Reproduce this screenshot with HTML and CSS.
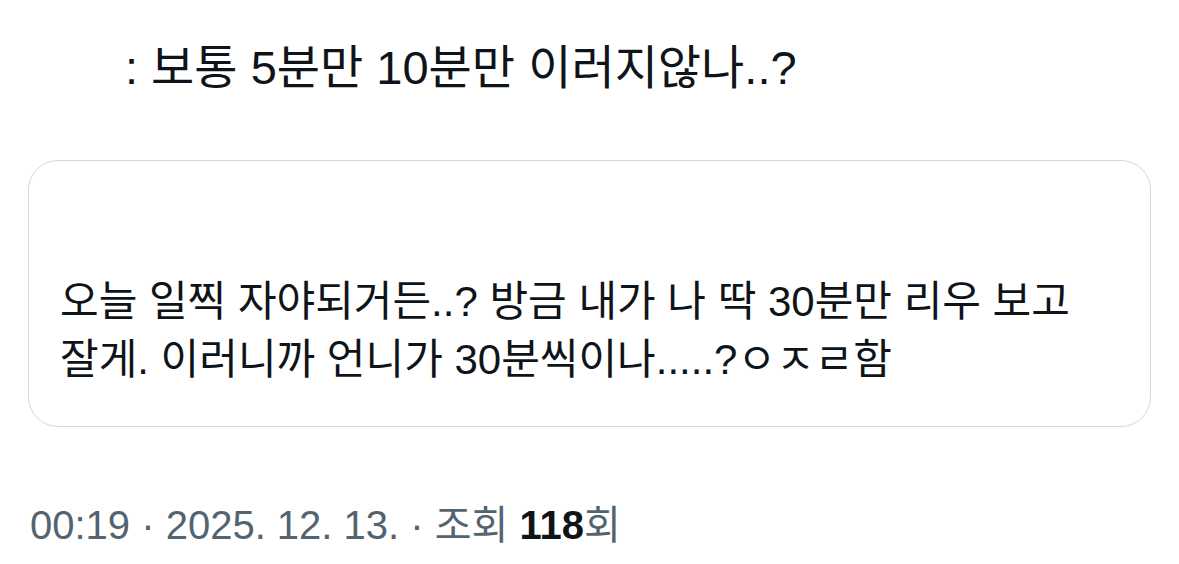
FILE: index.html
```html
<!DOCTYPE html>
<html lang="ko">
<head>
    <meta charset="UTF-8">
    <meta name="viewport" content="width=device-width, initial-scale=1.0">
    <title>Tweet</title>
    <link rel="stylesheet" href="styles.css">
</head>
<body>
    <div class="tweet">
        <p class="reply">: 보통 5분만 10분만 이러지않나..?</p>
        <div class="quote">
            <p class="quote-text">오늘 일찍 자야되거든..? 방금 내가 나 딱 30분만 리우 보고<br>잘게. 이러니까 언니가 30분씩이나.....?ㅇㅈㄹ함</p>
        </div>
        <p class="meta">00:19 · 2025. 12. 13. · 조회 <b>118</b>회</p>
    </div>
</body>
</html>
```

FILE: styles.css
```css
body{
    margin: 0;
    background-color: white;
    font-family: "Liberation Sans", "Noto Sans CJK KR", sans-serif;
    color: #0f1419;
}
.tweet{
    width: 1179px;
    height: 564px;
    padding: 0 28px;
    box-sizing: border-box;
}
.reply{
    margin: 0;
    padding: 40px 0 0 97px;
    font-size: 47px;
    line-height: 56px;
    height: 160px;
    box-sizing: border-box;
}
.quote{
    height: 267px;
    border: 1px solid #cfd9de;
    border-radius: 30px;
    box-sizing: border-box;
    padding: 112px 0 0 31px;
}
.quote-text{
    margin: 0;
    font-size: 42px;
    line-height: 58px;
}
.meta{
    margin: 0;
    padding-top: 75px;
    padding-left: 2px;
    font-size: 40px;
    line-height: 46px;
    color: #536471;
}
.meta b{
    color: #0f1419;
    font-weight: bold;
}
```
